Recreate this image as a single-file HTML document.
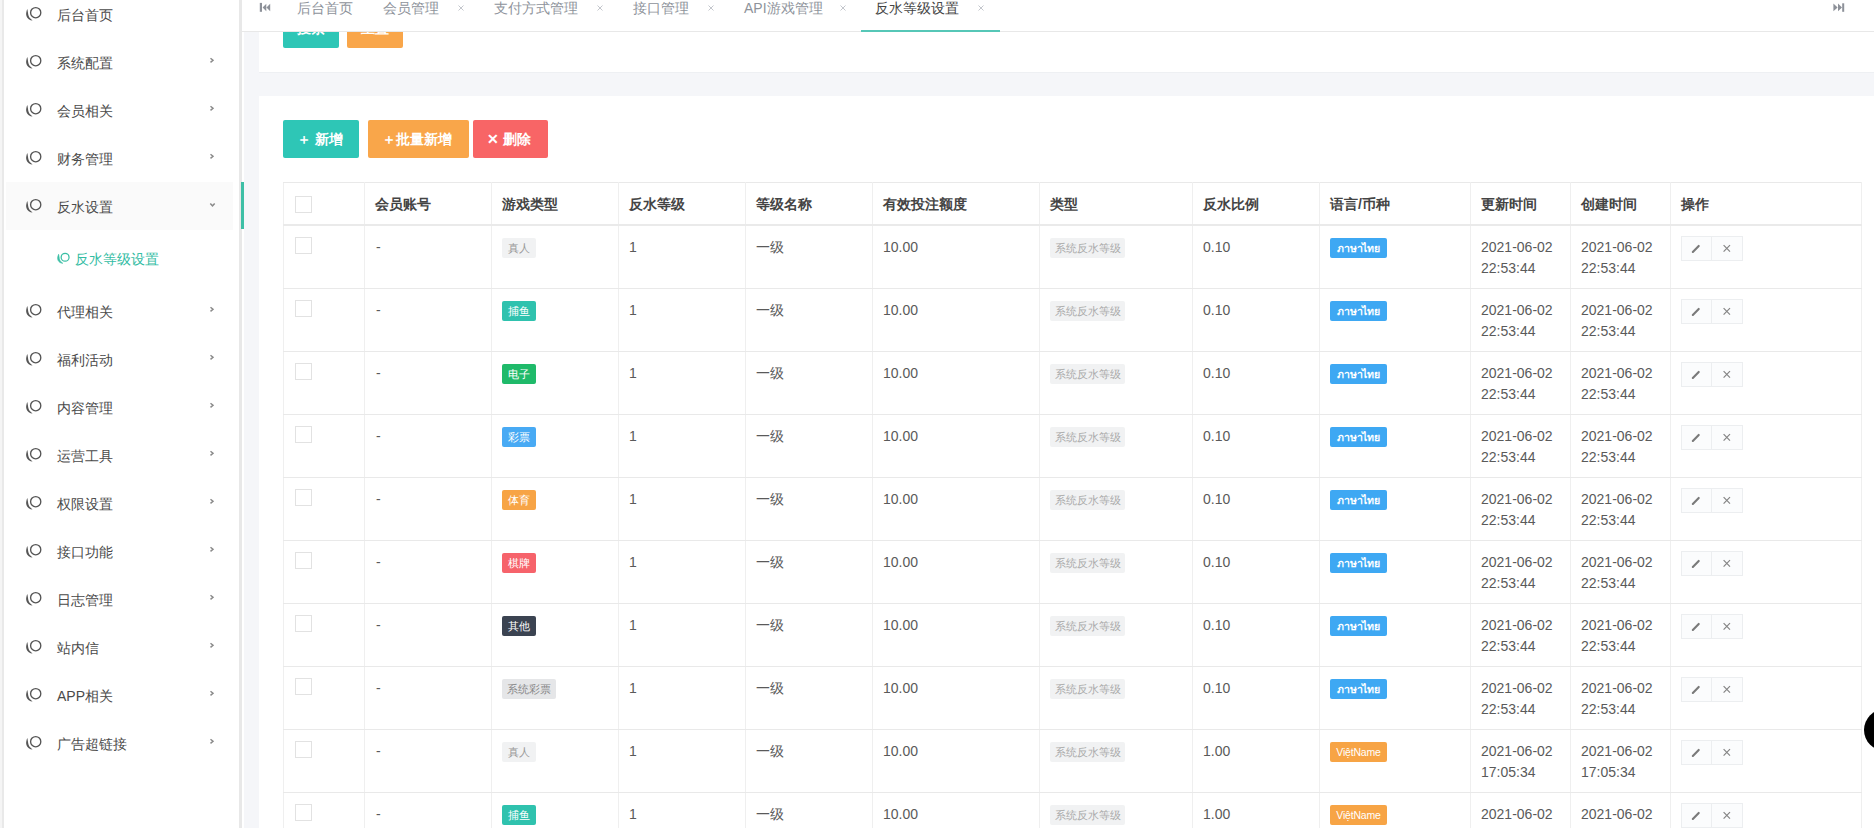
<!DOCTYPE html><html><head><meta charset="utf-8"><style>

*{margin:0;padding:0;box-sizing:border-box}
html,body{width:1874px;height:828px;overflow:hidden;background:#f5f6f9;
 font-family:"Liberation Sans",sans-serif;font-size:14px;color:#666}
.abs{position:absolute}
#side{position:absolute;left:0;top:0;width:239px;height:828px;background:#fff}
#side .lstrip{position:absolute;left:0;top:0;width:2px;height:828px;background:#f5f5f5}
#side .lline{position:absolute;left:2px;top:0;width:2px;height:828px;background:#e9e9e9}
#rstrip{position:absolute;left:239px;top:0;width:3px;height:828px;background:#e8e8e8}
#wstrip{position:absolute;left:242px;top:0;width:2px;height:828px;background:#fff}
.si{position:absolute;left:0;width:239px;height:48px}
.si .ic{position:absolute;left:24px;top:16px}
.si .tx{position:absolute;left:57px;top:16px;line-height:18px;font-size:14px;color:#4a4a4a;white-space:nowrap}
.si .ch{position:absolute;left:208px;top:18px}
.si.act{background:#fafafa;left:6px;width:227px}
.si.act .ic{left:18px}.si.act .tx{left:51px}.si.act .ch{left:202px}
#actbar{position:absolute;left:241px;top:182px;width:3px;height:47px;background:#3dbfa6}
#tabs{position:absolute;left:242px;top:0;width:1632px;height:32px;background:#fff;border-bottom:1px solid #e8e8e8}
.tab{position:absolute;top:0;height:31px;white-space:nowrap;font-size:14px;color:#8e939b;line-height:16px}
.tab .t{position:absolute;top:0}
.tab .x{position:absolute;top:0;font-size:10px;color:#b5b9c0}
#card1{position:absolute;left:259px;top:0;width:1615px;height:72px;background:#fff}
#card2{position:absolute;left:259px;top:96px;width:1615px;height:732px;background:#fff}
.btn{position:absolute;height:38px;color:#fff;border-radius:2px;font-size:14px;line-height:38px;white-space:nowrap;font-weight:bold}
table{position:absolute;left:283px;top:182px;border-collapse:collapse;table-layout:fixed}
td,th{border:1px solid #efefef;border-top-color:#e9e9e9;border-bottom-color:#e9e9e9;text-align:left;vertical-align:top;white-space:nowrap;overflow:hidden}
th{height:42px;border-bottom:2px solid #eaeaea;font-weight:bold;color:#444;padding:12px 0 0 10px;line-height:18px}
.r1 td{height:64px}
td{height:63px;padding:11px 0 0 10px;line-height:21px;color:#5a5a5a}
.cb{display:inline-block;width:17px;height:17px;border:1px solid #e2e2e2;background:#fff;margin-left:1px}
.tag{display:inline-block;height:20px;line-height:20px;padding:0 6px;font-size:10.5px;border-radius:2px;color:#fff;vertical-align:top;margin-top:1px}
.ops{display:inline-block;margin-top:-1px;height:25px;border:1px solid #eceef0;background:#fbfcfd}

</style></head><body>
<div id="card1"></div><div class="abs" style="left:259px;top:72px;width:1615px;height:1px;background:#eef0f3"></div><div id="card2"></div>
<div id="side"><div class="lstrip"></div><div class="lline"></div>
<div class="si" style="top:-10px"><span class="ic"><svg width="18" height="16" viewBox="0 0 18 16" style="display:block"><circle cx="11.7" cy="6.7" r="5.1" fill="none" stroke="#555" stroke-width="1.35"/><path d="M3.3 3.0 C2.4 5.0 2.0 7.5 2.2 8.8 C2.4 10.6 3.3 12.0 4.8 13.2 C5.9 14.0 7.2 14.4 8.6 14.4 C7.4 13.6 6.2 12.6 5.4 11.5 C4.8 10.6 4.4 9.5 4.2 8.3 C4.0 6.8 3.7 4.6 3.3 3.0Z" fill="#555"/></svg></span><span class="tx">后台首页</span></div>
<div class="si" style="top:38px"><span class="ic"><svg width="18" height="16" viewBox="0 0 18 16" style="display:block"><circle cx="11.7" cy="6.7" r="5.1" fill="none" stroke="#555" stroke-width="1.35"/><path d="M3.3 3.0 C2.4 5.0 2.0 7.5 2.2 8.8 C2.4 10.6 3.3 12.0 4.8 13.2 C5.9 14.0 7.2 14.4 8.6 14.4 C7.4 13.6 6.2 12.6 5.4 11.5 C4.8 10.6 4.4 9.5 4.2 8.3 C4.0 6.8 3.7 4.6 3.3 3.0Z" fill="#555"/></svg></span><span class="tx">系统配置</span></div>
<svg class="abs" style="left:206px;top:54px" width="12" height="12" viewBox="0 0 12 12"><path d="M4.5 4.2 L7 6.3 L4.5 8.4" fill="none" stroke="#8a8a8a" stroke-width="1.5"/></svg>
<div class="si" style="top:86px"><span class="ic"><svg width="18" height="16" viewBox="0 0 18 16" style="display:block"><circle cx="11.7" cy="6.7" r="5.1" fill="none" stroke="#555" stroke-width="1.35"/><path d="M3.3 3.0 C2.4 5.0 2.0 7.5 2.2 8.8 C2.4 10.6 3.3 12.0 4.8 13.2 C5.9 14.0 7.2 14.4 8.6 14.4 C7.4 13.6 6.2 12.6 5.4 11.5 C4.8 10.6 4.4 9.5 4.2 8.3 C4.0 6.8 3.7 4.6 3.3 3.0Z" fill="#555"/></svg></span><span class="tx">会员相关</span></div>
<svg class="abs" style="left:206px;top:102px" width="12" height="12" viewBox="0 0 12 12"><path d="M4.5 4.2 L7 6.3 L4.5 8.4" fill="none" stroke="#8a8a8a" stroke-width="1.5"/></svg>
<div class="si" style="top:134px"><span class="ic"><svg width="18" height="16" viewBox="0 0 18 16" style="display:block"><circle cx="11.7" cy="6.7" r="5.1" fill="none" stroke="#555" stroke-width="1.35"/><path d="M3.3 3.0 C2.4 5.0 2.0 7.5 2.2 8.8 C2.4 10.6 3.3 12.0 4.8 13.2 C5.9 14.0 7.2 14.4 8.6 14.4 C7.4 13.6 6.2 12.6 5.4 11.5 C4.8 10.6 4.4 9.5 4.2 8.3 C4.0 6.8 3.7 4.6 3.3 3.0Z" fill="#555"/></svg></span><span class="tx">财务管理</span></div>
<svg class="abs" style="left:206px;top:150px" width="12" height="12" viewBox="0 0 12 12"><path d="M4.5 4.2 L7 6.3 L4.5 8.4" fill="none" stroke="#8a8a8a" stroke-width="1.5"/></svg>
<div class="si act" style="top:182px"><span class="ic"><svg width="18" height="16" viewBox="0 0 18 16" style="display:block"><circle cx="11.7" cy="6.7" r="5.1" fill="none" stroke="#555" stroke-width="1.35"/><path d="M3.3 3.0 C2.4 5.0 2.0 7.5 2.2 8.8 C2.4 10.6 3.3 12.0 4.8 13.2 C5.9 14.0 7.2 14.4 8.6 14.4 C7.4 13.6 6.2 12.6 5.4 11.5 C4.8 10.6 4.4 9.5 4.2 8.3 C4.0 6.8 3.7 4.6 3.3 3.0Z" fill="#555"/></svg></span><span class="tx">反水设置</span></div>
<svg class="abs" style="left:206px;top:196px" width="14" height="14" viewBox="0 0 14 14"><path d="M4.3 7.5 L6.5 9.8 L8.7 7.5" fill="none" stroke="#8a8a8a" stroke-width="1.5"/></svg>
<div class="si" style="top:287px"><span class="ic"><svg width="18" height="16" viewBox="0 0 18 16" style="display:block"><circle cx="11.7" cy="6.7" r="5.1" fill="none" stroke="#555" stroke-width="1.35"/><path d="M3.3 3.0 C2.4 5.0 2.0 7.5 2.2 8.8 C2.4 10.6 3.3 12.0 4.8 13.2 C5.9 14.0 7.2 14.4 8.6 14.4 C7.4 13.6 6.2 12.6 5.4 11.5 C4.8 10.6 4.4 9.5 4.2 8.3 C4.0 6.8 3.7 4.6 3.3 3.0Z" fill="#555"/></svg></span><span class="tx">代理相关</span></div>
<svg class="abs" style="left:206px;top:303px" width="12" height="12" viewBox="0 0 12 12"><path d="M4.5 4.2 L7 6.3 L4.5 8.4" fill="none" stroke="#8a8a8a" stroke-width="1.5"/></svg>
<div class="si" style="top:335px"><span class="ic"><svg width="18" height="16" viewBox="0 0 18 16" style="display:block"><circle cx="11.7" cy="6.7" r="5.1" fill="none" stroke="#555" stroke-width="1.35"/><path d="M3.3 3.0 C2.4 5.0 2.0 7.5 2.2 8.8 C2.4 10.6 3.3 12.0 4.8 13.2 C5.9 14.0 7.2 14.4 8.6 14.4 C7.4 13.6 6.2 12.6 5.4 11.5 C4.8 10.6 4.4 9.5 4.2 8.3 C4.0 6.8 3.7 4.6 3.3 3.0Z" fill="#555"/></svg></span><span class="tx">福利活动</span></div>
<svg class="abs" style="left:206px;top:351px" width="12" height="12" viewBox="0 0 12 12"><path d="M4.5 4.2 L7 6.3 L4.5 8.4" fill="none" stroke="#8a8a8a" stroke-width="1.5"/></svg>
<div class="si" style="top:383px"><span class="ic"><svg width="18" height="16" viewBox="0 0 18 16" style="display:block"><circle cx="11.7" cy="6.7" r="5.1" fill="none" stroke="#555" stroke-width="1.35"/><path d="M3.3 3.0 C2.4 5.0 2.0 7.5 2.2 8.8 C2.4 10.6 3.3 12.0 4.8 13.2 C5.9 14.0 7.2 14.4 8.6 14.4 C7.4 13.6 6.2 12.6 5.4 11.5 C4.8 10.6 4.4 9.5 4.2 8.3 C4.0 6.8 3.7 4.6 3.3 3.0Z" fill="#555"/></svg></span><span class="tx">内容管理</span></div>
<svg class="abs" style="left:206px;top:399px" width="12" height="12" viewBox="0 0 12 12"><path d="M4.5 4.2 L7 6.3 L4.5 8.4" fill="none" stroke="#8a8a8a" stroke-width="1.5"/></svg>
<div class="si" style="top:431px"><span class="ic"><svg width="18" height="16" viewBox="0 0 18 16" style="display:block"><circle cx="11.7" cy="6.7" r="5.1" fill="none" stroke="#555" stroke-width="1.35"/><path d="M3.3 3.0 C2.4 5.0 2.0 7.5 2.2 8.8 C2.4 10.6 3.3 12.0 4.8 13.2 C5.9 14.0 7.2 14.4 8.6 14.4 C7.4 13.6 6.2 12.6 5.4 11.5 C4.8 10.6 4.4 9.5 4.2 8.3 C4.0 6.8 3.7 4.6 3.3 3.0Z" fill="#555"/></svg></span><span class="tx">运营工具</span></div>
<svg class="abs" style="left:206px;top:447px" width="12" height="12" viewBox="0 0 12 12"><path d="M4.5 4.2 L7 6.3 L4.5 8.4" fill="none" stroke="#8a8a8a" stroke-width="1.5"/></svg>
<div class="si" style="top:479px"><span class="ic"><svg width="18" height="16" viewBox="0 0 18 16" style="display:block"><circle cx="11.7" cy="6.7" r="5.1" fill="none" stroke="#555" stroke-width="1.35"/><path d="M3.3 3.0 C2.4 5.0 2.0 7.5 2.2 8.8 C2.4 10.6 3.3 12.0 4.8 13.2 C5.9 14.0 7.2 14.4 8.6 14.4 C7.4 13.6 6.2 12.6 5.4 11.5 C4.8 10.6 4.4 9.5 4.2 8.3 C4.0 6.8 3.7 4.6 3.3 3.0Z" fill="#555"/></svg></span><span class="tx">权限设置</span></div>
<svg class="abs" style="left:206px;top:495px" width="12" height="12" viewBox="0 0 12 12"><path d="M4.5 4.2 L7 6.3 L4.5 8.4" fill="none" stroke="#8a8a8a" stroke-width="1.5"/></svg>
<div class="si" style="top:527px"><span class="ic"><svg width="18" height="16" viewBox="0 0 18 16" style="display:block"><circle cx="11.7" cy="6.7" r="5.1" fill="none" stroke="#555" stroke-width="1.35"/><path d="M3.3 3.0 C2.4 5.0 2.0 7.5 2.2 8.8 C2.4 10.6 3.3 12.0 4.8 13.2 C5.9 14.0 7.2 14.4 8.6 14.4 C7.4 13.6 6.2 12.6 5.4 11.5 C4.8 10.6 4.4 9.5 4.2 8.3 C4.0 6.8 3.7 4.6 3.3 3.0Z" fill="#555"/></svg></span><span class="tx">接口功能</span></div>
<svg class="abs" style="left:206px;top:543px" width="12" height="12" viewBox="0 0 12 12"><path d="M4.5 4.2 L7 6.3 L4.5 8.4" fill="none" stroke="#8a8a8a" stroke-width="1.5"/></svg>
<div class="si" style="top:575px"><span class="ic"><svg width="18" height="16" viewBox="0 0 18 16" style="display:block"><circle cx="11.7" cy="6.7" r="5.1" fill="none" stroke="#555" stroke-width="1.35"/><path d="M3.3 3.0 C2.4 5.0 2.0 7.5 2.2 8.8 C2.4 10.6 3.3 12.0 4.8 13.2 C5.9 14.0 7.2 14.4 8.6 14.4 C7.4 13.6 6.2 12.6 5.4 11.5 C4.8 10.6 4.4 9.5 4.2 8.3 C4.0 6.8 3.7 4.6 3.3 3.0Z" fill="#555"/></svg></span><span class="tx">日志管理</span></div>
<svg class="abs" style="left:206px;top:591px" width="12" height="12" viewBox="0 0 12 12"><path d="M4.5 4.2 L7 6.3 L4.5 8.4" fill="none" stroke="#8a8a8a" stroke-width="1.5"/></svg>
<div class="si" style="top:623px"><span class="ic"><svg width="18" height="16" viewBox="0 0 18 16" style="display:block"><circle cx="11.7" cy="6.7" r="5.1" fill="none" stroke="#555" stroke-width="1.35"/><path d="M3.3 3.0 C2.4 5.0 2.0 7.5 2.2 8.8 C2.4 10.6 3.3 12.0 4.8 13.2 C5.9 14.0 7.2 14.4 8.6 14.4 C7.4 13.6 6.2 12.6 5.4 11.5 C4.8 10.6 4.4 9.5 4.2 8.3 C4.0 6.8 3.7 4.6 3.3 3.0Z" fill="#555"/></svg></span><span class="tx">站内信</span></div>
<svg class="abs" style="left:206px;top:639px" width="12" height="12" viewBox="0 0 12 12"><path d="M4.5 4.2 L7 6.3 L4.5 8.4" fill="none" stroke="#8a8a8a" stroke-width="1.5"/></svg>
<div class="si" style="top:671px"><span class="ic"><svg width="18" height="16" viewBox="0 0 18 16" style="display:block"><circle cx="11.7" cy="6.7" r="5.1" fill="none" stroke="#555" stroke-width="1.35"/><path d="M3.3 3.0 C2.4 5.0 2.0 7.5 2.2 8.8 C2.4 10.6 3.3 12.0 4.8 13.2 C5.9 14.0 7.2 14.4 8.6 14.4 C7.4 13.6 6.2 12.6 5.4 11.5 C4.8 10.6 4.4 9.5 4.2 8.3 C4.0 6.8 3.7 4.6 3.3 3.0Z" fill="#555"/></svg></span><span class="tx">APP相关</span></div>
<svg class="abs" style="left:206px;top:687px" width="12" height="12" viewBox="0 0 12 12"><path d="M4.5 4.2 L7 6.3 L4.5 8.4" fill="none" stroke="#8a8a8a" stroke-width="1.5"/></svg>
<div class="si" style="top:719px"><span class="ic"><svg width="18" height="16" viewBox="0 0 18 16" style="display:block"><circle cx="11.7" cy="6.7" r="5.1" fill="none" stroke="#555" stroke-width="1.35"/><path d="M3.3 3.0 C2.4 5.0 2.0 7.5 2.2 8.8 C2.4 10.6 3.3 12.0 4.8 13.2 C5.9 14.0 7.2 14.4 8.6 14.4 C7.4 13.6 6.2 12.6 5.4 11.5 C4.8 10.6 4.4 9.5 4.2 8.3 C4.0 6.8 3.7 4.6 3.3 3.0Z" fill="#555"/></svg></span><span class="tx">广告超链接</span></div>
<svg class="abs" style="left:206px;top:735px" width="12" height="12" viewBox="0 0 12 12"><path d="M4.5 4.2 L7 6.3 L4.5 8.4" fill="none" stroke="#8a8a8a" stroke-width="1.5"/></svg>
<div class="abs" style="left:56px;top:252px"><svg width="14" height="12.5" viewBox="0 0 18 16" style="display:block"><circle cx="11.7" cy="6.7" r="5.1" fill="none" stroke="#3bbfa5" stroke-width="1.6"/><path d="M3.3 3.0 C2.4 5.0 2.0 7.5 2.2 8.8 C2.4 10.6 3.3 12.0 4.8 13.2 C5.9 14.0 7.2 14.4 8.6 14.4 C7.4 13.6 6.2 12.6 5.4 11.5 C4.8 10.6 4.4 9.5 4.2 8.3 C4.0 6.8 3.7 4.6 3.3 3.0Z" fill="#3bbfa5" stroke="#3bbfa5" stroke-width="0.9"/></svg></div>
<div class="abs" style="left:75px;top:250px;line-height:18px;color:#32bca3;white-space:nowrap">反水等级设置</div>
</div>
<div id="rstrip"></div><div id="wstrip"></div><div id="actbar"></div>
<div id="tabs">
<svg class="abs" style="left:13px;top:0" width="20" height="16" viewBox="255 0 20 16"><rect x="259.8" y="2.9" width="2.2" height="8.9" fill="#8d9199"/><path d="M262.6 7.5 L266.3 3.8 L266.3 11.2Z M266.5 7.5 L270.2 3.8 L270.2 11.2Z" fill="#8d9199"/></svg>
<div class="tab" style="left:55px;color:#8e939b"><span class="t" style="top:0">后台首页</span></div>
<div class="tab" style="left:141px;color:#8e939b"><span class="t" style="top:0">会员管理</span></div>
<svg class="abs" style="left:216px;top:5px" width="6" height="6" viewBox="0 0 6 6"><path d="M0.5 0.5 L5.5 5.5 M5.5 0.5 L0.5 5.5" stroke="#c3c6cc" stroke-width="1"/></svg>
<div class="tab" style="left:252px;color:#8e939b"><span class="t" style="top:0">支付方式管理</span></div>
<svg class="abs" style="left:355px;top:5px" width="6" height="6" viewBox="0 0 6 6"><path d="M0.5 0.5 L5.5 5.5 M5.5 0.5 L0.5 5.5" stroke="#c3c6cc" stroke-width="1"/></svg>
<div class="tab" style="left:391px;color:#8e939b"><span class="t" style="top:0">接口管理</span></div>
<svg class="abs" style="left:466px;top:5px" width="6" height="6" viewBox="0 0 6 6"><path d="M0.5 0.5 L5.5 5.5 M5.5 0.5 L0.5 5.5" stroke="#c3c6cc" stroke-width="1"/></svg>
<div class="tab" style="left:502px;color:#8e939b"><span class="t" style="top:0">API游戏管理</span></div>
<svg class="abs" style="left:598px;top:5px" width="6" height="6" viewBox="0 0 6 6"><path d="M0.5 0.5 L5.5 5.5 M5.5 0.5 L0.5 5.5" stroke="#c3c6cc" stroke-width="1"/></svg>
<div class="tab" style="left:633px;color:#444"><span class="t" style="top:0">反水等级设置</span></div>
<svg class="abs" style="left:736px;top:5px" width="6" height="6" viewBox="0 0 6 6"><path d="M0.5 0.5 L5.5 5.5 M5.5 0.5 L0.5 5.5" stroke="#c3c6cc" stroke-width="1"/></svg>
<div class="abs" style="left:619px;top:30px;width:139px;height:2px;background:#56c7b7"></div>
<svg class="abs" style="left:1588px;top:0" width="20" height="16" viewBox="1830 0 20 16"><rect x="1842.2" y="3.3" width="2" height="8.5" fill="#8d9199"/><path d="M1833.4 3.6 L1837.6 7.4 L1833.4 11.2Z M1838.0 3.6 L1842.0 7.4 L1838.0 11.2Z" fill="#8d9199"/></svg>
</div>
<div class="btn" style="left:283px;top:10px;width:56px;background:#2ec6b6;text-align:center;line-height:36px">搜索</div>
<div class="btn" style="left:347px;top:10px;width:56px;background:#f9a64a;text-align:center;line-height:36px">重置</div>
<style>#tabs{z-index:5}</style>
<div class="btn" style="left:283px;top:120px;width:76px;background:#2ec6b6;padding-left:14px">＋ 新增</div>
<div class="btn" style="left:368px;top:120px;width:101px;background:#f9a64a;padding-left:14px">＋批量新增</div>
<div class="btn" style="left:473px;top:120px;width:75px;background:#f86566;padding-left:14px">✕ 删除</div>
<table><colgroup>
<col style="width:81px">
<col style="width:127px">
<col style="width:127px">
<col style="width:127px">
<col style="width:127px">
<col style="width:167px">
<col style="width:153px">
<col style="width:127px">
<col style="width:151px">
<col style="width:100px">
<col style="width:100px">
<col style="width:191px">
</colgroup><tr>
<th style="padding-top:13px"><span class="cb"></span></th>
<th>会员账号</th>
<th>游戏类型</th>
<th>反水等级</th>
<th>等级名称</th>
<th>有效投注额度</th>
<th>类型</th>
<th>反水比例</th>
<th>语言/币种</th>
<th>更新时间</th>
<th>创建时间</th>
<th>操作</th>
</tr>
<tr class="r1">
<td style="padding-top:11px"><span class="cb"></span></td>
<td style="padding-left:11px">-</td>
<td><span class="tag" style="background:#f1f2f3;color:#999;width:34px;padding:0;text-align:center">真人</span></td>
<td>1</td>
<td>一级</td>
<td>10.00</td>
<td><span class="tag" style="background:#f1f2f3;color:#aaa;width:75px;padding:0;text-align:center">系统反水等级</span></td>
<td>0.10</td>
<td><span class="tag" style="background:#3ea8f3;width:57px;text-align:center;padding:0;letter-spacing:-0.2px;font-weight:bold">ภาษาไทย</span></td>
<td>2021-06-02<br>22:53:44</td>
<td>2021-06-02<br>22:53:44</td>
<td><span class="ops"><svg width="30" height="23" viewBox="0 0 30 23" style="display:block;float:left;border-right:1px solid #eceef0"><path d="M11.2 15.1 L17.3 8.8" stroke="#7a7a7a" stroke-width="2.2" stroke-linecap="round"/></svg><svg width="30" height="23" viewBox="0 0 30 23" style="display:block;float:left"><path d="M11.6 8.2 L18 14.6 M18 8.2 L11.6 14.6" stroke="#858585" stroke-width="1.2"/></svg></span></td>
</tr>
<tr>
<td style="padding-top:11px"><span class="cb"></span></td>
<td style="padding-left:11px">-</td>
<td><span class="tag" style="background:#2fc2ae;color:#fff;width:34px;padding:0;text-align:center">捕鱼</span></td>
<td>1</td>
<td>一级</td>
<td>10.00</td>
<td><span class="tag" style="background:#f1f2f3;color:#aaa;width:75px;padding:0;text-align:center">系统反水等级</span></td>
<td>0.10</td>
<td><span class="tag" style="background:#3ea8f3;width:57px;text-align:center;padding:0;letter-spacing:-0.2px;font-weight:bold">ภาษาไทย</span></td>
<td>2021-06-02<br>22:53:44</td>
<td>2021-06-02<br>22:53:44</td>
<td><span class="ops"><svg width="30" height="23" viewBox="0 0 30 23" style="display:block;float:left;border-right:1px solid #eceef0"><path d="M11.2 15.1 L17.3 8.8" stroke="#7a7a7a" stroke-width="2.2" stroke-linecap="round"/></svg><svg width="30" height="23" viewBox="0 0 30 23" style="display:block;float:left"><path d="M11.6 8.2 L18 14.6 M18 8.2 L11.6 14.6" stroke="#858585" stroke-width="1.2"/></svg></span></td>
</tr>
<tr>
<td style="padding-top:11px"><span class="cb"></span></td>
<td style="padding-left:11px">-</td>
<td><span class="tag" style="background:#1fba6a;color:#fff;width:34px;padding:0;text-align:center">电子</span></td>
<td>1</td>
<td>一级</td>
<td>10.00</td>
<td><span class="tag" style="background:#f1f2f3;color:#aaa;width:75px;padding:0;text-align:center">系统反水等级</span></td>
<td>0.10</td>
<td><span class="tag" style="background:#3ea8f3;width:57px;text-align:center;padding:0;letter-spacing:-0.2px;font-weight:bold">ภาษาไทย</span></td>
<td>2021-06-02<br>22:53:44</td>
<td>2021-06-02<br>22:53:44</td>
<td><span class="ops"><svg width="30" height="23" viewBox="0 0 30 23" style="display:block;float:left;border-right:1px solid #eceef0"><path d="M11.2 15.1 L17.3 8.8" stroke="#7a7a7a" stroke-width="2.2" stroke-linecap="round"/></svg><svg width="30" height="23" viewBox="0 0 30 23" style="display:block;float:left"><path d="M11.6 8.2 L18 14.6 M18 8.2 L11.6 14.6" stroke="#858585" stroke-width="1.2"/></svg></span></td>
</tr>
<tr>
<td style="padding-top:11px"><span class="cb"></span></td>
<td style="padding-left:11px">-</td>
<td><span class="tag" style="background:#48aaf4;color:#fff;width:34px;padding:0;text-align:center">彩票</span></td>
<td>1</td>
<td>一级</td>
<td>10.00</td>
<td><span class="tag" style="background:#f1f2f3;color:#aaa;width:75px;padding:0;text-align:center">系统反水等级</span></td>
<td>0.10</td>
<td><span class="tag" style="background:#3ea8f3;width:57px;text-align:center;padding:0;letter-spacing:-0.2px;font-weight:bold">ภาษาไทย</span></td>
<td>2021-06-02<br>22:53:44</td>
<td>2021-06-02<br>22:53:44</td>
<td><span class="ops"><svg width="30" height="23" viewBox="0 0 30 23" style="display:block;float:left;border-right:1px solid #eceef0"><path d="M11.2 15.1 L17.3 8.8" stroke="#7a7a7a" stroke-width="2.2" stroke-linecap="round"/></svg><svg width="30" height="23" viewBox="0 0 30 23" style="display:block;float:left"><path d="M11.6 8.2 L18 14.6 M18 8.2 L11.6 14.6" stroke="#858585" stroke-width="1.2"/></svg></span></td>
</tr>
<tr>
<td style="padding-top:11px"><span class="cb"></span></td>
<td style="padding-left:11px">-</td>
<td><span class="tag" style="background:#f7a445;color:#fff;width:34px;padding:0;text-align:center">体育</span></td>
<td>1</td>
<td>一级</td>
<td>10.00</td>
<td><span class="tag" style="background:#f1f2f3;color:#aaa;width:75px;padding:0;text-align:center">系统反水等级</span></td>
<td>0.10</td>
<td><span class="tag" style="background:#3ea8f3;width:57px;text-align:center;padding:0;letter-spacing:-0.2px;font-weight:bold">ภาษาไทย</span></td>
<td>2021-06-02<br>22:53:44</td>
<td>2021-06-02<br>22:53:44</td>
<td><span class="ops"><svg width="30" height="23" viewBox="0 0 30 23" style="display:block;float:left;border-right:1px solid #eceef0"><path d="M11.2 15.1 L17.3 8.8" stroke="#7a7a7a" stroke-width="2.2" stroke-linecap="round"/></svg><svg width="30" height="23" viewBox="0 0 30 23" style="display:block;float:left"><path d="M11.6 8.2 L18 14.6 M18 8.2 L11.6 14.6" stroke="#858585" stroke-width="1.2"/></svg></span></td>
</tr>
<tr>
<td style="padding-top:11px"><span class="cb"></span></td>
<td style="padding-left:11px">-</td>
<td><span class="tag" style="background:#f6636b;color:#fff;width:34px;padding:0;text-align:center">棋牌</span></td>
<td>1</td>
<td>一级</td>
<td>10.00</td>
<td><span class="tag" style="background:#f1f2f3;color:#aaa;width:75px;padding:0;text-align:center">系统反水等级</span></td>
<td>0.10</td>
<td><span class="tag" style="background:#3ea8f3;width:57px;text-align:center;padding:0;letter-spacing:-0.2px;font-weight:bold">ภาษาไทย</span></td>
<td>2021-06-02<br>22:53:44</td>
<td>2021-06-02<br>22:53:44</td>
<td><span class="ops"><svg width="30" height="23" viewBox="0 0 30 23" style="display:block;float:left;border-right:1px solid #eceef0"><path d="M11.2 15.1 L17.3 8.8" stroke="#7a7a7a" stroke-width="2.2" stroke-linecap="round"/></svg><svg width="30" height="23" viewBox="0 0 30 23" style="display:block;float:left"><path d="M11.6 8.2 L18 14.6 M18 8.2 L11.6 14.6" stroke="#858585" stroke-width="1.2"/></svg></span></td>
</tr>
<tr>
<td style="padding-top:11px"><span class="cb"></span></td>
<td style="padding-left:11px">-</td>
<td><span class="tag" style="background:#3b4351;color:#fff;width:34px;padding:0;text-align:center">其他</span></td>
<td>1</td>
<td>一级</td>
<td>10.00</td>
<td><span class="tag" style="background:#f1f2f3;color:#aaa;width:75px;padding:0;text-align:center">系统反水等级</span></td>
<td>0.10</td>
<td><span class="tag" style="background:#3ea8f3;width:57px;text-align:center;padding:0;letter-spacing:-0.2px;font-weight:bold">ภาษาไทย</span></td>
<td>2021-06-02<br>22:53:44</td>
<td>2021-06-02<br>22:53:44</td>
<td><span class="ops"><svg width="30" height="23" viewBox="0 0 30 23" style="display:block;float:left;border-right:1px solid #eceef0"><path d="M11.2 15.1 L17.3 8.8" stroke="#7a7a7a" stroke-width="2.2" stroke-linecap="round"/></svg><svg width="30" height="23" viewBox="0 0 30 23" style="display:block;float:left"><path d="M11.6 8.2 L18 14.6 M18 8.2 L11.6 14.6" stroke="#858585" stroke-width="1.2"/></svg></span></td>
</tr>
<tr>
<td style="padding-top:11px"><span class="cb"></span></td>
<td style="padding-left:11px">-</td>
<td><span class="tag" style="background:#e5e6e8;color:#888;width:54px;padding:0;text-align:center">系统彩票</span></td>
<td>1</td>
<td>一级</td>
<td>10.00</td>
<td><span class="tag" style="background:#f1f2f3;color:#aaa;width:75px;padding:0;text-align:center">系统反水等级</span></td>
<td>0.10</td>
<td><span class="tag" style="background:#3ea8f3;width:57px;text-align:center;padding:0;letter-spacing:-0.2px;font-weight:bold">ภาษาไทย</span></td>
<td>2021-06-02<br>22:53:44</td>
<td>2021-06-02<br>22:53:44</td>
<td><span class="ops"><svg width="30" height="23" viewBox="0 0 30 23" style="display:block;float:left;border-right:1px solid #eceef0"><path d="M11.2 15.1 L17.3 8.8" stroke="#7a7a7a" stroke-width="2.2" stroke-linecap="round"/></svg><svg width="30" height="23" viewBox="0 0 30 23" style="display:block;float:left"><path d="M11.6 8.2 L18 14.6 M18 8.2 L11.6 14.6" stroke="#858585" stroke-width="1.2"/></svg></span></td>
</tr>
<tr>
<td style="padding-top:11px"><span class="cb"></span></td>
<td style="padding-left:11px">-</td>
<td><span class="tag" style="background:#f1f2f3;color:#999;width:34px;padding:0;text-align:center">真人</span></td>
<td>1</td>
<td>一级</td>
<td>10.00</td>
<td><span class="tag" style="background:#f1f2f3;color:#aaa;width:75px;padding:0;text-align:center">系统反水等级</span></td>
<td>1.00</td>
<td><span class="tag" style="background:#f7a445;width:57px;text-align:center;padding:0;letter-spacing:-0.2px;font-weight:normal">ViệtName</span></td>
<td>2021-06-02<br>17:05:34</td>
<td>2021-06-02<br>17:05:34</td>
<td><span class="ops"><svg width="30" height="23" viewBox="0 0 30 23" style="display:block;float:left;border-right:1px solid #eceef0"><path d="M11.2 15.1 L17.3 8.8" stroke="#7a7a7a" stroke-width="2.2" stroke-linecap="round"/></svg><svg width="30" height="23" viewBox="0 0 30 23" style="display:block;float:left"><path d="M11.6 8.2 L18 14.6 M18 8.2 L11.6 14.6" stroke="#858585" stroke-width="1.2"/></svg></span></td>
</tr>
<tr>
<td style="padding-top:11px"><span class="cb"></span></td>
<td style="padding-left:11px">-</td>
<td><span class="tag" style="background:#2fc2ae;color:#fff;width:34px;padding:0;text-align:center">捕鱼</span></td>
<td>1</td>
<td>一级</td>
<td>10.00</td>
<td><span class="tag" style="background:#f1f2f3;color:#aaa;width:75px;padding:0;text-align:center">系统反水等级</span></td>
<td>1.00</td>
<td><span class="tag" style="background:#f7a445;width:57px;text-align:center;padding:0;letter-spacing:-0.2px;font-weight:normal">ViệtName</span></td>
<td>2021-06-02<br>17:05:34</td>
<td>2021-06-02<br>17:05:34</td>
<td><span class="ops"><svg width="30" height="23" viewBox="0 0 30 23" style="display:block;float:left;border-right:1px solid #eceef0"><path d="M11.2 15.1 L17.3 8.8" stroke="#7a7a7a" stroke-width="2.2" stroke-linecap="round"/></svg><svg width="30" height="23" viewBox="0 0 30 23" style="display:block;float:left"><path d="M11.6 8.2 L18 14.6 M18 8.2 L11.6 14.6" stroke="#858585" stroke-width="1.2"/></svg></span></td>
</tr>
</table>
<div class="abs" style="left:1864px;top:709px;width:42px;height:42px;border-radius:50%;background:#000;z-index:9"></div>
</body></html>
